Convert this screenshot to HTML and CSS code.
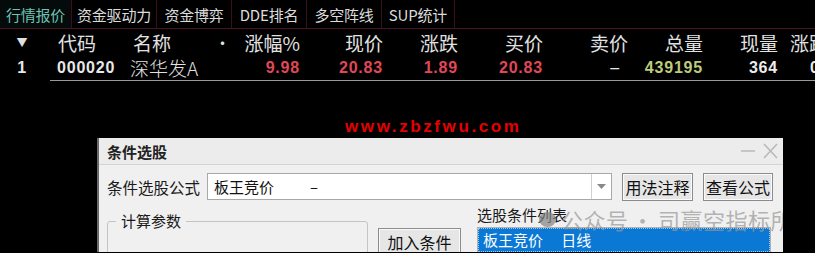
FILE: index.html
```html
<!DOCTYPE html>
<html>
<head>
<meta charset="utf-8">
<link rel="stylesheet" href="styles.css">
</head>
<body>
<div class="screen">
  <div class="tabs">
    <div class="tab active w72">行情报价</div>
    <div class="tab w85">资金驱动力</div>
    <div class="tab w75">资金博弈</div>
    <div class="tab w75">DDE排名</div>
    <div class="tab w75">多空阵线</div>
    <div class="tab w73">SUP统计</div>
  </div>
  <div class="grid head">
    <div class="c center arrow">▼</div>
    <div class="c left pl8">代码</div>
    <div class="c left pl8">名称</div>
    <div class="c center dot">·</div>
    <div class="c right">涨幅%</div>
    <div class="c right">现价</div>
    <div class="c right">涨跌</div>
    <div class="c right">买价</div>
    <div class="c right">卖价</div>
    <div class="c right">总量</div>
    <div class="c right">现量</div>
    <div class="c left pl12">涨跌</div>
  </div>
  <div class="grid row">
    <div class="c center num idx">1</div>
    <div class="c left num pl7">000020</div>
    <div class="c left name pl5">深华发A</div>
    <div class="c"></div>
    <div class="c right num red">9.98</div>
    <div class="c right num red">20.83</div>
    <div class="c right num red">1.89</div>
    <div class="c right num red">20.83</div>
    <div class="c right num dash">–</div>
    <div class="c right num green">439195</div>
    <div class="c right num white">364</div>
    <div class="c left num white pl32">0</div>
  </div>
  <div class="rowline"></div>
  <div class="banner"><span class="url">www.zbzfwu.com</span></div>
  <div class="dialog">
    <div class="titlebar">
      <span class="title">条件选股</span>
      <span class="winbtns">
        <svg width="40" height="18" viewBox="0 0 40 18"><line x1="2" y1="9" x2="16" y2="9" stroke="#b8b8b8" stroke-width="1.5"/><line x1="25" y1="2" x2="38" y2="16" stroke="#b8b8b8" stroke-width="1.5"/><line x1="38" y1="2" x2="25" y2="16" stroke="#b8b8b8" stroke-width="1.5"/></svg>
      </span>
    </div>
    <div class="dbody">
      <div class="formula">
        <span class="lbl">条件选股公式</span>
        <div class="combo">
          <span class="ctext">板王竞价</span><span class="cdash">–</span>
          <span class="dropbtn"><svg width="9" height="6" viewBox="0 0 9 6"><path d="M0 0 L9 0 L4.5 5 Z" fill="#888"/></svg></span>
        </div>
        <div class="btn b1">用法注释</div>
        <div class="btn b2">查看公式</div>
      </div>
      <div class="lower">
        <div class="group"><span class="glabel">计算参数</span></div>
        <div class="btn add">加入条件</div>
        <div class="listcol">
          <div class="listlbl">选股条件列表</div>
          <div class="listbox"><div class="sel">板王竞价　 日线</div></div>
        </div>
      </div>
    </div>
    <div class="watermark"><span class="wmicon"></span>公众号<span class="wmdot">·</span>司赢空指标所</div>
  </div>
</div>
</body>
</html>
```
FILE: styles.css
```css
* { box-sizing: border-box; }
html, body { margin: 0; padding: 0; background: #000; }
body { width: 815px; height: 253px; overflow: hidden; font-family: "Noto Sans CJK SC", "Liberation Sans", sans-serif; }
.screen { width: 815px; height: 253px; position: relative; overflow: hidden; }

.tabs { display: flex; height: 29px; border-bottom: 1px solid #4a1425; }
.tab { height: 28px; display: flex; align-items: center; justify-content: center; color: #dcdcdc; font-size: 15px; border-right: 1px solid #3c0e1c; letter-spacing: -0.2px; }
.tab.active { color: #6cc4b4; background: #050a0a; }
.w72 { width: 72px; } .w85 { width: 85px; } .w75 { width: 75px; } .w73 { width: 73px; }

.grid { display: grid; grid-template-columns: 50px 75px 85px 25px 65px 83px 75px 85px 85px 75px 75px 37px; width: 815px; white-space: nowrap; overflow: hidden; }
.head { height: 27px; color: #e2e2e2; font-size: 19px; align-items: center; }
.head .c { line-height: 27px; }
.row { height: 24px; align-items: center; color: #e8e8e8; }
.rowline { height: 1px; margin-left: 50px; background: #9a9a9a; }
.c { overflow: hidden; }
.center { text-align: center; }
.left { text-align: left; }
.right { text-align: right; }
.pl5 { padding-left: 5px; } .pl7 { padding-left: 7px; } .pl8 { padding-left: 8px; } .pl12 { padding-left: 12px; } .pl32 { padding-left: 32px; }
.arrow { font-size: 11px; color: #e0e0e0; padding-right: 6px; }
.dot { font-size: 16px; }
.num { font-family: "Liberation Sans", sans-serif; font-weight: bold; font-size: 16px; letter-spacing: 0.8px; line-height: 24px; }
.idx { color: #e8e8e8; padding-right: 6px; }
.name { font-size: 19px; color: #e2e2e2; line-height: 24px; font-weight: 300; }
.red { color: #e0485a; }
.green { color: #bccb7c; }
.white { color: #ececec; }
.dash { color: #e8e8e8; padding-right: 8px; font-weight: normal; }

.banner { height: 57px; position: relative; }
.url { position: absolute; left: 345px; top: 36px; color: #e80000; font-family: "Liberation Sans", sans-serif; font-weight: bold; font-size: 17px; letter-spacing: 2.6px; }

.dialog { margin-left: 97px; width: 686px; height: 114px; background: #f0f0f0; border-left: 2px solid #6a6a6a; position: relative; overflow: hidden; }
.titlebar { height: 27px; display: flex; align-items: center; justify-content: space-between; padding: 0 4px 0 8px; border-bottom: 1px solid #d4d4d4; background: #ececec; }
.title { font-size: 15px; font-weight: bold; color: #222; }
.winbtns { display: flex; align-items: center; }

.dbody { padding: 7px 0 0 8px; }
.formula { display: flex; align-items: center; height: 29px; }
.lbl { font-size: 15.5px; color: #1a1a1a; width: 100px; }
.combo { width: 405px; height: 27px; background: #fff; border: 1px solid #a8a8a8; display: flex; align-items: center; position: relative; font-size: 15px; color: #111; }
.ctext { padding-left: 6px; }
.cdash { margin-left: 36px; }
.dropbtn { position: absolute; right: 0; top: 0; width: 20px; height: 25px; border-left: 1px solid #d0d0d0; display: flex; align-items: center; justify-content: center; }
.btn { height: 28px; background: #e6e6e6; border: 1px solid #8c8c8c; box-shadow: inset 0 0 0 1px #fafafa; display: flex; align-items: center; justify-content: center; font-size: 16px; color: #111; }
.b1 { width: 71px; margin-left: 10px; }
.b2 { width: 70px; margin-left: 10px; }

.lower { display: flex; margin-top: 3px; }
.group { width: 261px; height: 60px; margin-top: 17px; border: 1px solid #c4c4c4; border-radius: 3px; position: relative; }
.glabel { position: absolute; left: 8px; top: -12px; background: #f0f0f0; padding: 0 5px; font-size: 15px; color: #1a1a1a; line-height: 22px; }
.add { width: 83px; height: 28px; margin-left: 10px; margin-top: 24px; }
.listcol { margin-left: 16px; }
.listlbl { font-size: 15px; color: #1a1a1a; height: 23px; line-height: 22px; }
.listbox { width: 294px; height: 40px; border: 1px solid #b0b0b0; background: #fff; padding: 0; }
.sel { background: #0a78d4; color: #fff; font-size: 15px; height: 24px; line-height: 22px; padding-left: 4px; border: 1px dotted #9cc8f0; }

.watermark { position: absolute; left: 440px; top: 65px; font-size: 22px; color: rgba(150,150,150,0.7); display: flex; align-items: center; letter-spacing: 0.5px; white-space: nowrap; }
.wmdot { margin: 0 4px 0 3px; }
.wmicon { width: 17px; height: 15px; border-radius: 50%; background: rgba(130,130,130,0.7); margin-right: 5px; }
```
